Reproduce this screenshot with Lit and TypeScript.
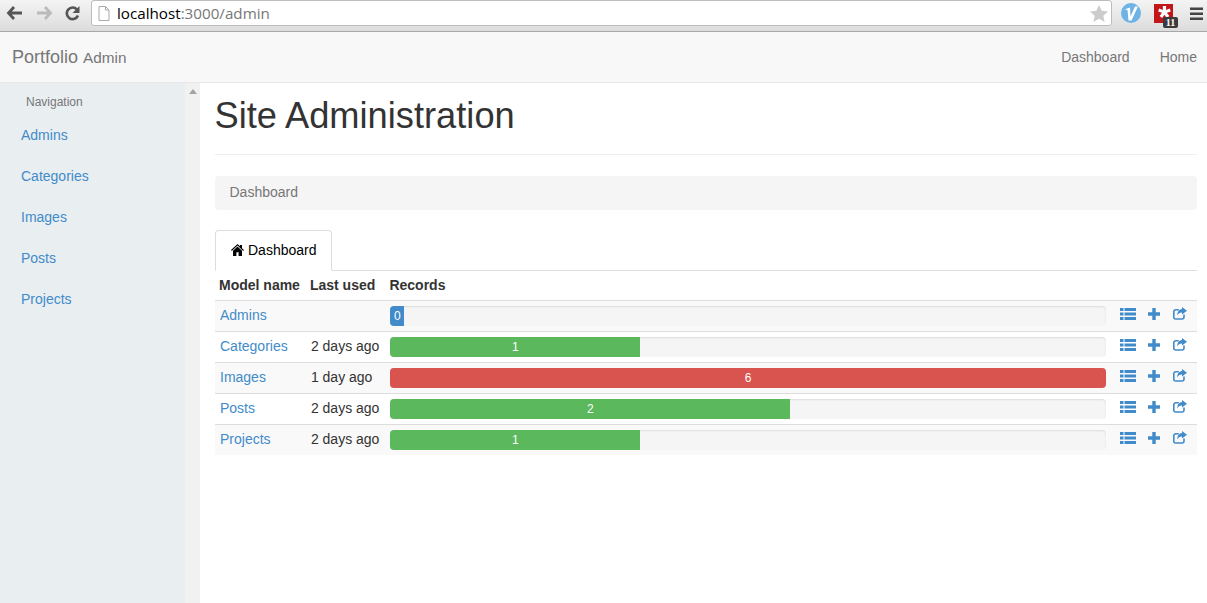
import { LitElement, css, html, svg } from 'lit'
import { customElement } from 'lit/decorators.js'

interface ModelRow {
  name: string
  used: string
  count: number
  width: string
  tone: string
}

const rows: ModelRow[] = [
  { name: 'Admins', used: '', count: 0, width: '14px', tone: 'blue' },
  { name: 'Categories', used: '2 days ago', count: 1, width: '250px', tone: 'green' },
  { name: 'Images', used: '1 day ago', count: 6, width: '100%', tone: 'red' },
  { name: 'Posts', used: '2 days ago', count: 2, width: '400px', tone: 'green' },
  { name: 'Projects', used: '2 days ago', count: 1, width: '250px', tone: 'green' },
]

const sideLinks = ['Admins', 'Categories', 'Images', 'Posts', 'Projects']

const listIcon = svg`<svg width="16" height="12" viewBox="0 0 16 12" fill="#428bca"><path d="M0 0h3.5v3H0zM4.5 0H16v3H4.5zM0 4.5h3.5v3H0zM4.5 4.5H16v3H4.5zM0 9h3.5v3H0zM4.5 9H16v3H4.5z"/></svg>`
const plusIcon = svg`<svg width="12" height="12" viewBox="0 0 12 12" fill="#428bca"><path d="M4.3 0h3.4v4.3H12v3.4H7.7V12H4.3V7.7H0V4.3h4.3z"/></svg>`
const shareIcon = svg`<svg width="14" height="13" viewBox="0 0 14 13"><path d="M11 7.600v2.400a2 2 0 0 1-2 2H2.800a2 2 0 0 1-2-2V4.800a2 2 0 0 1 2-2h3" fill="none" stroke="#428bca" stroke-width="1.600"/><path d="M9 0l5 3.800-5 3.800V5.400C6.800 5.300 5.300 6.200 4.400 8.600 4.200 5 5.800 2.300 9 2z" fill="#428bca"/></svg>`

@customElement('app-root')
export class AppRoot extends LitElement {
  static styles = css`
    :host {
      display: flex;
      flex-direction: column;
      height: 603px;
      overflow: hidden;
      font-family: 'Liberation Sans', Arial, sans-serif;
      font-size: 14px;
      color: #333;
      background: #fff;
    }
    .chrome {
      height: 32px;
      flex: none;
      box-sizing: border-box;
      display: flex;
      align-items: center;
      padding: 0 0 5px 6px;
      background: linear-gradient(#f4f4f4, #dcdcdc);
      border-bottom: 1px solid #a8a8a8;
    }
    .nav-btn {
      width: 18px;
      height: 16px;
      margin-right: 11px;
      display: block;
    }
    .omnibox {
      width: 1021px;
      height: 26px;
      margin-left: -2px;
      box-sizing: border-box;
      display: flex;
      align-items: center;
      padding: 0 3px 0 6px;
      gap: 7px;
      background: #fff;
      border: 1px solid #bdbdbd;
      border-radius: 3px;
      font-family: 'Open Sans', sans-serif;
      font-size: 15.2px;
      color: #777;
    }
    .omnibox b {
      font-weight: 400;
      color: #000;
    }
    .url {
      flex: 1;
      white-space: nowrap;
    }
    .ext {
      display: block;
    }
    .ext-v {
      margin-left: 9px;
    }
    .badge-wrap {
      position: relative;
      width: 24px;
      height: 24px;
      margin-left: 13px;
    }
    .badge-wrap .ext {
      margin-top: 3px;
    }
    .badge {
      position: absolute;
      left: 9px;
      top: 16px;
      width: 15px;
      height: 11px;
      background: #3c3c3c;
      border-radius: 2px;
      color: #fff;
      font: 700 10px/11px 'Liberation Serif', serif;
      text-align: center;
    }
    .menu {
      margin-left: 12px;
    }
    .navbar {
      height: 51px;
      flex: none;
      display: flex;
      align-items: center;
      justify-content: space-between;
      box-sizing: border-box;
      padding: 0 10px 0 12px;
      background: #f8f8f8;
      border-bottom: 1px solid #e7e7e7;
      color: #777;
    }
    .brand {
      font-size: 18px;
    }
    .brand small {
      font-size: 15.3px;
    }
    .nav-links {
      display: flex;
      gap: 30px;
    }
    .body {
      flex: 1;
      display: flex;
      min-height: 0;
    }
    .sidebar {
      width: 185px;
      flex: none;
      background: #e9eef1;
      padding-top: 8px;
      box-sizing: border-box;
    }
    .side-title {
      padding-left: 26px;
      font-size: 12px;
      line-height: 22px;
      color: #777;
    }
    .side-link {
      display: block;
      padding-left: 21px;
      height: 41px;
      line-height: 41px;
      color: #428bca;
      text-decoration: none;
    }
    .side-title + .side-link {
      margin-top: 2px;
    }
    .scrollbar {
      width: 15px;
      flex: none;
      background: #f1f1f1;
      display: flex;
      justify-content: center;
      padding-top: 6px;
      box-sizing: border-box;
    }
    .arrow {
      width: 0;
      height: 0;
      border-left: 4px solid transparent;
      border-right: 4px solid transparent;
      border-bottom: 5px solid #a3a3a3;
    }
    main {
      flex: 1;
      min-width: 0;
      padding: 0 10px 0 15px;
    }
    h1 {
      margin: 0;
      padding: 13px 0 18px;
      height: 40px;
      font-size: 36.25px;
      line-height: 40px;
      font-weight: 400;
      color: #333;
      border-bottom: 1px solid #eee;
      box-sizing: content-box;
      text-indent: -0.5px;
    }
    .crumb {
      margin-top: 21px;
      height: 34px;
      line-height: 32px;
      padding-left: 14.5px;
      background: #f5f5f5;
      border-radius: 4px;
      color: #777;
    }
    .tabs {
      margin-top: 20px;
      height: 41px;
      box-sizing: border-box;
      border-bottom: 1px solid #ddd;
    }
    .tab {
      display: inline-flex;
      align-items: center;
      gap: 4px;
      height: 41px;
      box-sizing: border-box;
      padding: 0 14px 2px 15px;
      background: #fff;
      border: 1px solid #ddd;
      border-bottom-color: #fff;
      border-radius: 4px 4px 0 0;
      color: #000;
    }
    table {
      width: 100%;
      border-collapse: collapse;
    }
    th,
    td {
      height: 31px;
      padding: 0 5px 2px;
      box-sizing: border-box;
      text-align: left;
      white-space: nowrap;
      border-top: 1px solid #ddd;
      color: #333;
    }
    th {
      height: 29px;
      padding-bottom: 0;
      border-top: 0;
      font-weight: 700;
    }
    th:first-child {
      padding-left: 4px;
    }
    th:nth-child(3) {
      padding-left: 4px;
    }
    td:nth-child(2) {
      padding-left: 6px;
      padding-right: 6px;
    }
    tbody tr:nth-child(odd) td {
      background: #f9f9f9;
    }
    td a {
      color: #428bca;
      text-decoration: none;
    }
    td.bar-cell {
      width: 100%;
      padding-bottom: 0;
    }
    .progress {
      height: 20px;
      background: #f5f5f5;
      border-radius: 4px;
      box-shadow: inset 0 1px 2px rgba(0, 0, 0, 0.1);
      overflow: hidden;
    }
    .fill {
      height: 20px;
      line-height: 20px;
      text-align: center;
      font-size: 12px;
      color: #fff;
    }
    .blue {
      background: #428bca;
    }
    .green {
      background: #5cb85c;
    }
    .red {
      background: #d9534f;
    }
    td.actions {
      padding-left: 9px;
      padding-right: 10px;
      padding-bottom: 4px;
    }
    .actions div {
      display: flex;
      align-items: center;
      gap: 12px;
    }
    .actions svg:last-child {
      margin-left: 1px;
    }
  `

  render() {
    return html`
      <div class="chrome">
        <svg class="nav-btn" viewBox="0 0 18 16"><path d="M8 2L2.500 8 8 14M3 8h13" fill="none" stroke="#555" stroke-width="2.800"/></svg>
        <svg class="nav-btn" viewBox="0 0 18 16"><path d="M10 2l5.500 6-5.500 6M15 8H2" fill="none" stroke="#bbb" stroke-width="2.800"/></svg>
        <svg class="nav-btn" viewBox="0 0 18 16"><path d="M14 10.500A5.800 5.800 0 1 1 13 4.500" fill="none" stroke="#555" stroke-width="2.600"/><path d="M15.500 1v7h-7z" fill="#555"/></svg>
        <div class="omnibox">
          <svg width="12" height="15" viewBox="0 0 12 15"><path d="M1 .5h6.500L11 4v10.500H1zM7.500.5V4H11" fill="#fff" stroke="#aaa"/></svg>
          <span class="url"><b>localhost</b>:3000/admin</span>
          <svg width="18" height="17" viewBox="0 0 18 17"><path d="M9 0l2.700 5.800 6.300.7-4.700 4.200 1.300 6.300L9 13.800 3.400 17l1.300-6.300L0 6.500l6.300-.7z" fill="#ccc"/></svg>
        </div>
        <svg class="ext ext-v" width="20" height="20" viewBox="0 0 20 20"><circle cx="10" cy="10" r="10" fill="#6db3e5"/><path d="M3.500 6.500l5.500-2 .5 9L14 3.500h3L10.500 17.500H7.500L6.500 7z" fill="#fff"/></svg>
        <div class="badge-wrap">
          <svg class="ext" width="19" height="19" viewBox="0 0 20 20"><rect width="20" height="20" fill="#c2161b"/><path d="M9.300 2h3.400v4.300l3.900-1.500 1 3.100-4 1.300 2.500 3.500-2.700 2-2.400-3.500-2.400 3.500-2.700-2 2.500-3.500-4-1.300 1-3.100 3.900 1.500z" fill="#fff"/></svg>
          <span class="badge">11</span>
        </div>
        <svg class="ext menu" width="13" height="13" viewBox="0 0 13 13" fill="#444"><path d="M0 .5h13v2.500H0zM0 5.500h13V8H0zM0 10.500h13V13H0z"/></svg>
      </div>
      <div class="navbar">
        <div class="brand">Portfolio <small>Admin</small></div>
        <div class="nav-links"><span>Dashboard</span><span>Home</span></div>
      </div>
      <div class="body">
        <aside class="sidebar">
          <div class="side-title">Navigation</div>
          ${sideLinks.map((l) => html`<a class="side-link" href="#">${l}</a>`)}
        </aside>
        <div class="scrollbar"><div class="arrow"></div></div>
        <main>
          <h1>Site Administration</h1>
          <div class="crumb">Dashboard</div>
          <div class="tabs">
            <span class="tab">
              <svg width="13" height="12" viewBox="0 0 13 12" fill="#000"><path d="M6.500 0L9 2.300V1h2v3.200L13 6l-.8.900L6.500 1.600.8 6.900 0 6zM2 6.700l4.500-4.100L11 6.700V12H7.600V8.300H5.400V12H2z"/></svg>
              Dashboard
            </span>
          </div>
          <table>
            <thead>
              <tr><th>Model name</th><th>Last used</th><th>Records</th><th></th></tr>
            </thead>
            <tbody>
              ${rows.map(
                (r) => html`
                  <tr>
                    <td><a href="#">${r.name}</a></td>
                    <td>${r.used}</td>
                    <td class="bar-cell">
                      <div class="progress">
                        <div class="fill ${r.tone}" style="width:${r.width}">${r.count}</div>
                      </div>
                    </td>
                    <td class="actions"><div>${listIcon}${plusIcon}${shareIcon}</div></td>
                  </tr>
                `,
              )}
            </tbody>
          </table>
        </main>
      </div>
    `
  }
}
